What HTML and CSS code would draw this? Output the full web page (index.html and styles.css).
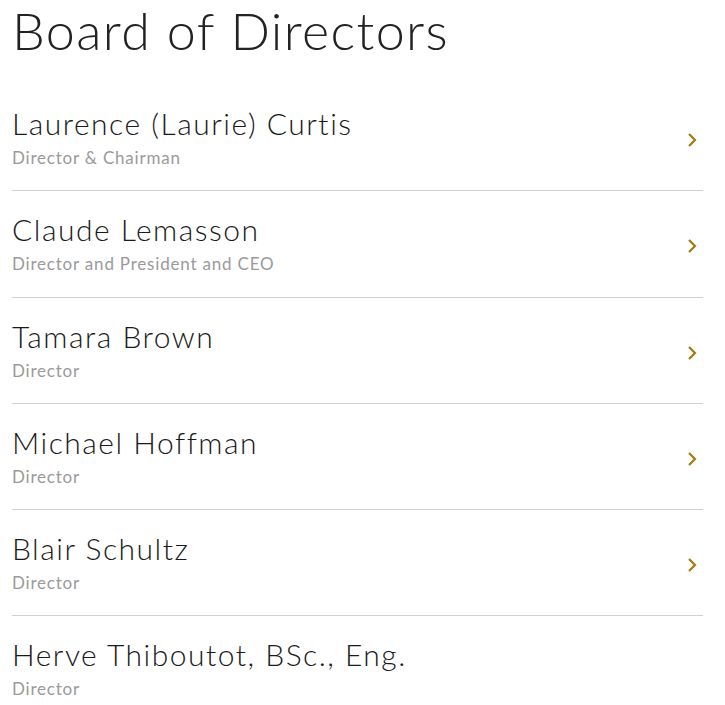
FILE: index.html
```html
<!DOCTYPE html>
<html lang="en">
<head>
<meta charset="utf-8">
<title>Board of Directors</title>
<link rel="stylesheet" href="styles.css">
</head>
<body>
<main class="board">
  <h1 class="board-title">Board of Directors</h1>
  <ul class="people">
    <li class="person">
      <div class="person-info">
        <div class="person-name">Laurence (Laurie) Curtis</div>
        <div class="person-role">Director &amp; Chairman</div>
      </div>
      <svg class="chevron" viewBox="0 0 10 16" width="10" height="16"><path d="M2 2 L8 8 L2 14" fill="none" stroke="currentColor" stroke-width="2.2"/></svg>
    </li>
    <li class="person">
      <div class="person-info">
        <div class="person-name">Claude Lemasson</div>
        <div class="person-role">Director and President and CEO</div>
      </div>
      <svg class="chevron" viewBox="0 0 10 16" width="10" height="16"><path d="M2 2 L8 8 L2 14" fill="none" stroke="currentColor" stroke-width="2.2"/></svg>
    </li>
    <li class="person">
      <div class="person-info">
        <div class="person-name">Tamara Brown</div>
        <div class="person-role">Director</div>
      </div>
      <svg class="chevron" viewBox="0 0 10 16" width="10" height="16"><path d="M2 2 L8 8 L2 14" fill="none" stroke="currentColor" stroke-width="2.2"/></svg>
    </li>
    <li class="person">
      <div class="person-info">
        <div class="person-name">Michael Hoffman</div>
        <div class="person-role">Director</div>
      </div>
      <svg class="chevron" viewBox="0 0 10 16" width="10" height="16"><path d="M2 2 L8 8 L2 14" fill="none" stroke="currentColor" stroke-width="2.2"/></svg>
    </li>
    <li class="person">
      <div class="person-info">
        <div class="person-name">Blair Schultz</div>
        <div class="person-role">Director</div>
      </div>
      <svg class="chevron" viewBox="0 0 10 16" width="10" height="16"><path d="M2 2 L8 8 L2 14" fill="none" stroke="currentColor" stroke-width="2.2"/></svg>
    </li>
    <li class="person person-last">
      <div class="person-info">
        <div class="person-name">Herve Thiboutot, BSc., Eng.</div>
        <div class="person-role">Director</div>
      </div>
    </li>
  </ul>
</main>
</body>
</html>
```
FILE: styles.css
```css
html, body {
  margin: 0;
  padding: 0;
  background: #ffffff;
}
body {
  font-family: "Lato", "Liberation Sans", sans-serif;
  color: #1e1e1e;
  overflow: hidden;
}
.board {
  padding: 0 22px 0 12px;
}
.board-title {
  margin: 0 0 25px 0;
  font-size: 52px;
  line-height: 60px;
  font-weight: 300;
  letter-spacing: 1.4px;
  color: #222222;
}
.people {
  list-style: none;
  margin: 0;
  padding: 0;
}
.person {
  display: flex;
  align-items: center;
  justify-content: space-between;
  padding: 20px 0 15.25px 0;
  border-bottom: 1px solid #d0d0d0;
}
.person-last {
  border-bottom: none;
}
.person-name {
  font-size: 30px;
  line-height: 36px;
  font-weight: 300;
  letter-spacing: 1.5px;
  color: #1a1a1a;
}
.person-role {
  font-size: 17px;
  line-height: 34px;
  letter-spacing: 0.8px;
  color: #9a9a9a;
}
.chevron {
  color: #a37a14;
  margin-right: 6px;
  flex: none;
}
```
